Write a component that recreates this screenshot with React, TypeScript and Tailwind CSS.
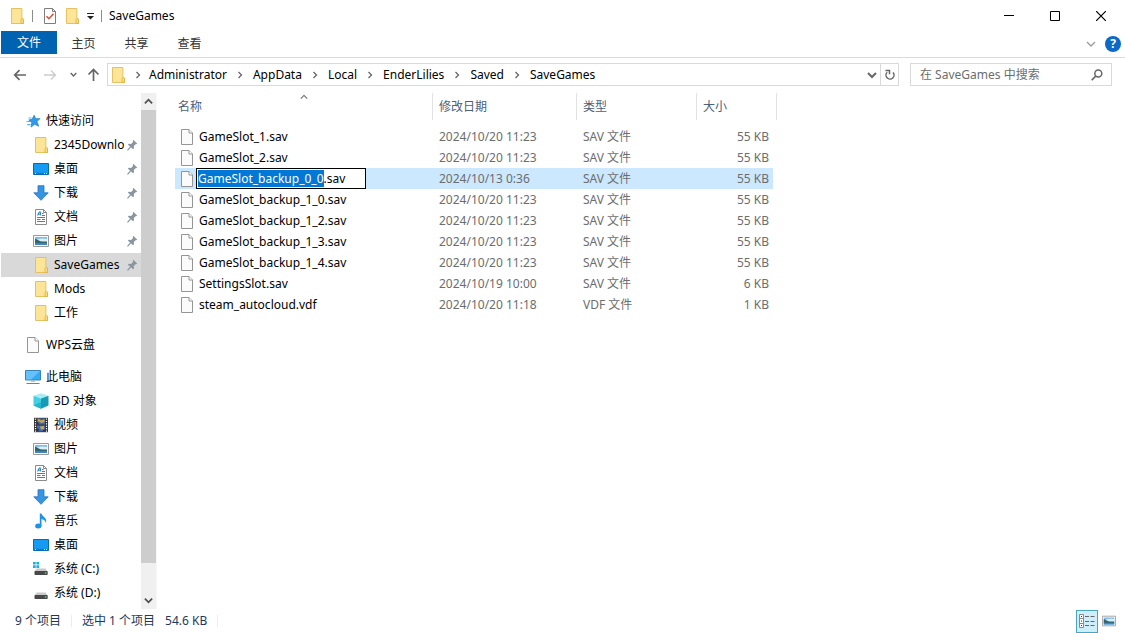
import { useEffect, useRef, type ReactNode } from 'react';

function FolderIcon() {
  return (
    <svg width="16" height="16" viewBox="0 0 16 16" className="shrink-0">
      <path d="M2.5.5h10.4v10l1.6 1v4h-12z" fill="#fde598" stroke="#e6c164" />
      <path d="M12 15.5v-3.8l1-1.4 1.5.8v4.4z" fill="#fbdc7c" stroke="#dcb040" strokeWidth="0.8" />
    </svg>
  );
}

function PageIcon() {
  return (
    <svg width="13" height="16" viewBox="0 0 13 16" className="shrink-0">
      <path d="M.5.5H8L11.5 4v11.5H.5z" fill="#fbfbfb" stroke="#959595" />
      <path d="M8 .5V4h3.5" fill="#fff" stroke="#959595" />
    </svg>
  );
}

function CheckPageIcon() {
  return (
    <svg width="13" height="16" viewBox="0 0 13 16">
      <path d="M.5.5h8l3 3v12H.5z" fill="#fff" stroke="#7d7d7d" />
      <path d="M8.5.5v3h3" fill="none" stroke="#7d7d7d" />
      <path d="M2.5 8.3l2.4 2.4 4.6-5" fill="none" stroke="#dd5333" strokeWidth="1.6" />
    </svg>
  );
}

function StarIcon() {
  return (
    <svg width="16" height="16" viewBox="0 0 16 16" className="shrink-0">
      <path d="M9.2 2.2l1.5 3.5 4.3-.1-3 3 1.7 4.7-4-2.1-3.6 2.9.7-4.6L3.8 7l3.2-.7z" fill="#2f9be8" stroke="#1c7cc6" strokeWidth="0.7" />
      <path d="M3.5 5h3M1.5 8.5h3.4M2.2 11.6h3.4" stroke="#5bb4f0" strokeWidth="1.1" />
    </svg>
  );
}

function DesktopIcon() {
  return (
    <svg width="16" height="16" viewBox="0 0 16 16" className="shrink-0">
      <path d="M.5 2.5h15v11H.5z" fill="#169bf5" stroke="#0b69ad" />
      <path d="M1 11.8h14v1.3H1z" fill="#0d7ccc" />
      <path d="M2 12.5h1M11 12.5h1M13 12.5h1" stroke="#fff" strokeWidth="0.8" />
    </svg>
  );
}

function DownloadIcon() {
  return (
    <svg width="16" height="16" viewBox="0 0 16 16" className="shrink-0">
      <path d="M5 .7h6v7.1h4.2L8 15.3.8 7.8H5z" fill="#3794e4" stroke="#2275bd" strokeWidth="0.8" />
    </svg>
  );
}

function DocumentIcon() {
  return (
    <svg width="16" height="16" viewBox="0 0 16 16" className="shrink-0">
      <path d="M2.5.5h8l3 3v12h-11z" fill="#fff" stroke="#8b8b8b" />
      <path d="M10.5.5v3h3" fill="none" stroke="#8b8b8b" />
      <path d="M4.5 6.500L6.300 3h1l.4 3.500M5 5.300h2.500M9 4.500h1.500M9 6.500h3M4 8.500h8M4 10.500h3.500M9 10.500h3M4 12.500h8" fill="none" stroke="#3285c8" strokeWidth="1.100" />
    </svg>
  );
}

function PictureIcon({ size = 16 }: { size?: number }) {
  return (
    <svg width={size} height={size} viewBox="0 0 16 16" className="shrink-0">
      <path d="M.5 2.5h15v11H.5z" fill="#fff" stroke="#9a9a9a" />
      <path d="M2 4h12v8H2z" fill="#7dbcf0" />
      <path d="M4 6.500c3-1.300 7-1.300 10-.5V9H4z" fill="#dceffa" />
      <path d="M2 6c2 0 3 1.600 5.500 2.200s4.500.3 6.500.3v1.700H2z" fill="#2f6470" />
      <path d="M2 10h12v2H2z" fill="#3f86bd" />
    </svg>
  );
}

function ComputerIcon() {
  return (
    <svg width="16" height="16" viewBox="0 0 16 16" className="shrink-0">
      <path d="M.5 1.5h15v9.5H.5z" fill="#36a9f4" stroke="#3a83b8" />
      <path d="M1 2h14L6 10.5H1z" fill="#66c1fa" />
      <path d="M6 11.5h4v1.3H6z" fill="#9dbdd3" />
      <path d="M1.5 14.5h13" stroke="#5a89aa" />
    </svg>
  );
}

function CubeIcon() {
  return (
    <svg width="16" height="16" viewBox="0 0 16 16" className="shrink-0">
      <path d="M8 .3l7.5 2.5L8 5.5.5 2.8z" fill="#a8ecf4" />
      <path d="M.5 2.8L8 5.5v10.2L.5 12.5z" fill="#45cfe2" />
      <path d="M15.5 2.8L8 5.5v10.2l7.5-3.2z" fill="#159bb5" />
      <path d="M.5 12.5L8 9v6.7z" fill="#26b4cf" />
    </svg>
  );
}

function VideoIcon() {
  return (
    <svg width="16" height="16" viewBox="0 0 16 16" className="shrink-0">
      <path d="M1 .8h14v14.4H1z" fill="#333" />
      <path d="M2.5 1.5v14M13.5 1.5v14" stroke="#fff" strokeWidth="1.2" strokeDasharray="1.2 1.2" />
      <path d="M4 1.5h8v6H4zM4 8.5h8v6H4z" fill="#4668b4" />
      <path d="M5 1.500l3 2 3.500-1v2.500L8.500 6 5 4zM7 9.500l4-.5v3l-3 .5z" fill="#caa842" />
      <path d="M4 5l3 2.500H4zM9 14.500l3-2.500v2.500zM4 11l2.500 2L4 14.500z" fill="#26304a" />
    </svg>
  );
}

function MusicIcon() {
  return (
    <svg width="16" height="16" viewBox="0 0 16 16" className="shrink-0">
      <ellipse cx="5.3" cy="13" rx="3.2" ry="2.5" fill="#1e94e6" />
      <path d="M6.8.5h1.7c.3 3 6.500 4.300 4.300 9.500-.4-2.400-2.200-3.500-4.300-3.900V13H6.800z" fill="#1e94e6" />
    </svg>
  );
}

function DriveIcon({ system = false }: { system?: boolean }) {
  return (
    <svg width="16" height="16" viewBox="0 0 16 16" className="shrink-0">
      <path d="M3.5 7.5h9l2.2 3H1.5z" fill="#c9c9c9" />
      <rect x="1.5" y="10" width="13.2" height="4" rx="0.8" fill="#484848" />
      <path d="M11.8 12h1.6" stroke="#57e08a" strokeWidth="1.2" />
      {system && <path d="M0 1h2.7v2.6H0zM3.4 1h2.8v2.6H3.4zM0 4.3h2.7v2.6H0zM3.4 4.3h2.8v2.6H3.4z" fill="#1cb0dc" />}
    </svg>
  );
}

function PinIcon() {
  return (
    <svg width="11" height="12" viewBox="0 0 11 12" className="shrink-0">
      <path d="M6.3.8l4 4-1.2.5-.5-.1-1.8 1.9.2 2.2-.9.9L.9 5.7l.9-.9 2.3.1L6 3.1l-.2-1z" fill="#8996a0" />
      <path d="M3.6 7.8L.5 11.3" stroke="#8996a0" strokeWidth="1.2" />
    </svg>
  );
}

function Chevron({ d, size = 10, color = '#666', width = 1.3 }: { d: string; size?: number; color?: string; width?: number }) {
  return (
    <svg width={size} height={size} viewBox="0 0 10 10" fill="none" stroke={color} strokeWidth={width} className="shrink-0">
      <path d={d} />
    </svg>
  );
}

const DOWN = 'M1 3l4 4 4-4';
const UP = 'M1 7l4-4 4 4';
const RIGHT = 'M3.5 2l3 3-3 3';

type Place = { label: string; icon: ReactNode; pinned?: boolean; selected?: boolean };
type Group = { label: string; icon: ReactNode; items: Place[] };

const groups: Group[] = [
  {
    label: '快速访问',
    icon: <StarIcon />,
    items: [
      { label: '2345Downloads', icon: <FolderIcon />, pinned: true },
      { label: '桌面', icon: <DesktopIcon />, pinned: true },
      { label: '下载', icon: <DownloadIcon />, pinned: true },
      { label: '文档', icon: <DocumentIcon />, pinned: true },
      { label: '图片', icon: <PictureIcon />, pinned: true },
      { label: 'SaveGames', icon: <FolderIcon />, pinned: true, selected: true },
      { label: 'Mods', icon: <FolderIcon /> },
      { label: '工作', icon: <FolderIcon /> },
    ],
  },
  { label: 'WPS云盘', icon: <PageIcon />, items: [] },
  {
    label: '此电脑',
    icon: <ComputerIcon />,
    items: [
      { label: '3D 对象', icon: <CubeIcon /> },
      { label: '视频', icon: <VideoIcon /> },
      { label: '图片', icon: <PictureIcon /> },
      { label: '文档', icon: <DocumentIcon /> },
      { label: '下载', icon: <DownloadIcon /> },
      { label: '音乐', icon: <MusicIcon /> },
      { label: '桌面', icon: <DesktopIcon /> },
      { label: '系统 (C:)', icon: <DriveIcon system /> },
      { label: '系统 (D:)', icon: <DriveIcon /> },
    ],
  },
];

const files = [
  { name: 'GameSlot_1.sav', date: '2024/10/20 11:23', type: 'SAV 文件', size: '55 KB' },
  { name: 'GameSlot_2.sav', date: '2024/10/20 11:23', type: 'SAV 文件', size: '55 KB' },
  { name: 'GameSlot_backup_0_0.sav', date: '2024/10/13 0:36', type: 'SAV 文件', size: '55 KB', renaming: true },
  { name: 'GameSlot_backup_1_0.sav', date: '2024/10/20 11:23', type: 'SAV 文件', size: '55 KB' },
  { name: 'GameSlot_backup_1_2.sav', date: '2024/10/20 11:23', type: 'SAV 文件', size: '55 KB' },
  { name: 'GameSlot_backup_1_3.sav', date: '2024/10/20 11:23', type: 'SAV 文件', size: '55 KB' },
  { name: 'GameSlot_backup_1_4.sav', date: '2024/10/20 11:23', type: 'SAV 文件', size: '55 KB' },
  { name: 'SettingsSlot.sav', date: '2024/10/19 10:00', type: 'SAV 文件', size: '6 KB' },
  { name: 'steam_autocloud.vdf', date: '2024/10/20 11:18', type: 'VDF 文件', size: '1 KB' },
];

const crumbs = ['Administrator', 'AppData', 'Local', 'EnderLilies', 'Saved', 'SaveGames'];

function TitleBar() {
  return (
    <header className="flex h-[31px] items-center pl-[9px] pr-px">
      <FolderIcon />
      <span className="mx-[7px] h-3 w-px bg-[#8c8c8c]" />
      <div className="flex items-center gap-[7px] pl-1">
        <button aria-label="属性"><CheckPageIcon /></button>
        <button aria-label="新建文件夹"><FolderIcon /></button>
        <button aria-label="自定义快速访问工具栏">
          <svg width="7" height="8" viewBox="0 0 7 8">
            <path d="M0 4h7L3.5 7.5z" fill="#222" />
            <path d="M0 1.5h7" stroke="#222" />
          </svg>
        </button>
      </div>
      <span className="mx-[7px] h-3 w-px bg-[#8c8c8c]" />
      <h1 className="flex-1">SaveGames</h1>
      <button aria-label="最小化" className="flex h-full w-[46px] items-center justify-center">
        <svg width="10" height="10" viewBox="0 0 10 10"><path d="M0 4.5h10" stroke="#000" /></svg>
      </button>
      <button aria-label="最大化" className="flex h-full w-[46px] items-center justify-center">
        <svg width="10" height="10" viewBox="0 0 10 10"><path d="M.5.5h9v9h-9z" fill="none" stroke="#000" /></svg>
      </button>
      <button aria-label="关闭" className="flex h-full w-[46px] items-center justify-center">
        <svg width="10" height="10" viewBox="0 0 10 10"><path d="M0 0l10 10M10 0L0 10" stroke="#000" strokeWidth="1.2" /></svg>
      </button>
    </header>
  );
}

function Ribbon() {
  return (
    <nav className="flex h-[27px] border-b border-[#dadbdc] pl-px pr-1">
      <button className="h-[23px] w-14 bg-[#0063b1] text-white">文件</button>
      <div className="flex flex-1 items-center">
        {['主页', '共享', '查看'].map((tab) => (
          <button key={tab} className="w-[53px] text-[#333]">{tab}</button>
        ))}
      </div>
      <div className="flex items-center gap-[9px]">
        <button aria-label="展开功能区"><Chevron d={DOWN} color="#9a9a9a" /></button>
        <button aria-label="帮助" className="size-4 rounded-full bg-[#0c69c7] text-center text-xs leading-4 font-bold text-white">?</button>
      </div>
    </nav>
  );
}

function AddressBar() {
  return (
    <div className="flex h-[33px] items-center pl-3 pr-[13px]">
      <button aria-label="后退" className="flex w-4 justify-center">
        <svg width="14" height="12" viewBox="0 0 14 12" fill="none" stroke="#666" strokeWidth="1.7"><path d="M13 6H2M6.5 1.2L1.7 6l4.8 4.8" /></svg>
      </button>
      <button aria-label="前进" className="ml-[14px] flex w-4 justify-center">
        <svg width="14" height="12" viewBox="0 0 14 12" fill="none" stroke="#ccc" strokeWidth="1.3"><path d="M1 6h11M8 1.5L12.5 6 8 10.5" /></svg>
      </button>
      <button aria-label="最近浏览的位置" className="ml-[11px] flex w-2 justify-center"><Chevron d={DOWN} size={7} width={2} /></button>
      <button aria-label="上移" className="ml-2 flex w-4 justify-center">
        <svg width="13" height="13" viewBox="0 0 13 13" fill="none" stroke="#666" strokeWidth="1.7"><path d="M6.5 13V2M1.5 6.5l5-5 5 5" /></svg>
      </button>
      <div className="ml-[6px] flex h-[23px] min-w-0 flex-1 items-center border border-[#d9d9d9] pl-[2px]">
        <FolderIcon />
        <ol className="flex min-w-0 flex-1 items-center">
          {crumbs.map((crumb) => (
            <li key={crumb} className="group flex items-center">
              <span className="flex w-[26px] justify-center group-first:w-[23px]"><Chevron d={RIGHT} /></span>
              <a href="#" className="text-black">{crumb}</a>
            </li>
          ))}
        </ol>
        <button aria-label="以前的位置" className="flex w-4 justify-center"><Chevron d={DOWN} width={2} /></button>
        <button aria-label="刷新" className="flex h-full w-[18px] items-center justify-center border-l border-[#d9d9d9]">
          <svg width="12" height="12" viewBox="0 0 12 12" fill="none" stroke="#666" strokeWidth="1.5">
            <path d="M3.2 3.2a4 4 0 1 0 5.8.2" />
            <path d="M1.5 1.5h4v3.7" />
          </svg>
        </button>
      </div>
      <label className="ml-[11px] flex h-[23px] w-[202px] items-center border border-[#d9d9d9] pl-[9px] pr-2">
        <input type="search" aria-label="搜索" placeholder="在 SaveGames 中搜索" className="min-w-0 flex-1 outline-none placeholder:text-[#6d6d6d]" />
        <svg width="12" height="12" viewBox="0 0 12 12" fill="none" stroke="#666" strokeWidth="1.5"><circle cx="7.3" cy="4.5" r="3.5" /><path d="M4.7 7.1l-4 4" /></svg>
      </label>
    </div>
  );
}

function Sidebar() {
  return (
    <aside className="flex w-[157px] shrink-0 border-r border-[#f7f7f7]">
      <nav className="flex min-w-0 flex-1 flex-col gap-2 overflow-hidden pl-px pt-4">
        {groups.map((group) => (
          <section key={group.label}>
            <a href="#" className="flex h-6 items-center gap-[5px] pl-6">
              <span className="flex w-4 justify-center">{group.icon}</span>
              {group.label}
            </a>
            {group.items.map((item) => (
              <a
                key={item.label}
                href="#"
                className={`flex h-6 items-center pl-8 pr-[3px] ${item.selected ? 'bg-[#d9d9d9]' : ''}`}
              >
                {item.icon}
                <span className="ml-[5px] mr-[3px] min-w-0 flex-1 overflow-hidden whitespace-nowrap">{item.label}</span>
                {item.pinned && <PinIcon />}
              </a>
            ))}
          </section>
        ))}
      </nav>
      <div className="flex w-[15px] flex-col bg-[#f0f0f0]">
        <button aria-label="向上滚动" className="flex h-[17px] items-center justify-center"><Chevron d={UP} size={9} color="#505050" width={2} /></button>
        <div className="flex-[453] bg-[#cdcdcd]" />
        <div className="flex-[29]" />
        <button aria-label="向下滚动" className="flex h-[17px] items-center justify-center"><Chevron d={DOWN} size={9} color="#505050" width={2} /></button>
      </div>
    </aside>
  );
}

function RenameBox({ name }: { name: string }) {
  const ref = useRef<HTMLInputElement>(null);
  useEffect(() => {
    ref.current?.focus();
    ref.current?.setSelectionRange(0, name.lastIndexOf('.'));
  }, [name]);
  return (
    <input
      ref={ref}
      aria-label="重命名"
      defaultValue={name}
      className="h-[21px] w-[170px] border border-black bg-white px-px text-black outline-none selection:bg-[#0078d7] selection:text-white"
    />
  );
}

function FileTable() {
  const divider = 'flex h-[27px] items-center border-r border-[#e2e2e2]';
  return (
    <table className="w-[602px] table-fixed border-collapse self-start text-left whitespace-nowrap">
      <colgroup>
        <col className="w-[258px]" />
        <col className="w-[144px]" />
        <col className="w-[120px]" />
        <col className="w-[76px]" />
        <col className="w-1" />
      </colgroup>
      <thead className="text-[#4c607a]">
        <tr>
          <th className="p-0 pb-[6px] font-normal">
            <div className={`relative ${divider} pl-[3px]`}>
              名称
              <span className="absolute left-1/2 top-0 -translate-x-1/2"><Chevron d={UP} size={8} /></span>
            </div>
          </th>
          <th className="p-0 pb-[6px] font-normal"><div className={`${divider} pl-[6px]`}>修改日期</div></th>
          <th className="p-0 pb-[6px] font-normal"><div className={`${divider} pl-[6px]`}>类型</div></th>
          <th colSpan={2} className="p-0 pb-[6px] font-normal"><div className={`${divider} pl-[6px]`}>大小</div></th>
        </tr>
      </thead>
      <tbody className="text-[#6d6d6d]">
        {files.map((file) => {
          const bg = file.renaming ? 'bg-[#cce8ff]' : '';
          return (
            <tr key={file.name} className="h-[21px]">
              <td className={`p-0 ${bg}`}>
                <div className="flex h-[21px] items-center gap-[2px] pl-[6px] text-black">
                  <PageIcon />
                  {file.renaming ? <RenameBox name={file.name} /> : <span className="px-[3px]">{file.name}</span>}
                </div>
              </td>
              <td className={`p-0 pl-[6px] ${bg}`}>{file.date}</td>
              <td className={`p-0 pl-[6px] ${bg}`}>{file.type}</td>
              <td className={`p-0 pr-1 text-right ${bg}`}>{file.size}</td>
              <td className="p-0" />
            </tr>
          );
        })}
      </tbody>
    </table>
  );
}

function StatusBar() {
  return (
    <footer className="flex h-6 items-center pl-[15px] pr-[5px] text-[#1e395b]">
      <span>9 个项目</span>
      <span className="mx-[10px] h-3 w-px bg-[#ececec]" />
      <span>选中 1 个项目</span>
      <span className="mx-[10px]">54.6 KB</span>
      <span className="h-3 w-px bg-[#ececec]" />
      <div className="ml-auto flex h-full items-center">
        <button aria-label="详细信息" className="flex h-[23px] w-[22px] items-center justify-center border border-[#4aa5c5] bg-[#cdeefa]">
          <svg width="16" height="14" viewBox="0 0 16 14" fill="none">
            <path d="M.5.5h4v13h-4zM.5 4.5h4M.5 9.5h4" stroke="#8a8a8a" fill="#fff" />
            <path d="M2 2.5h1M2 7h1M2 11.5h1" stroke="#333" />
            <path d="M6 2.5h4M11.5 2.5h4M6 7.5h4M11.5 7.5h4M6 11.5h4M11.5 11.5h4" stroke="#666" />
          </svg>
        </button>
        <button aria-label="大缩略图" className="flex h-[23px] w-[22px] items-center justify-center">
          <PictureIcon size={14} />
        </button>
      </div>
    </footer>
  );
}

export default function App() {
  return (
    <div className="flex min-h-screen flex-col bg-white font-['Noto_Sans','Noto_Sans_CJK_SC',sans-serif] text-xs text-black">
      <TitleBar />
      <Ribbon />
      <AddressBar />
      <main className="flex flex-1 gap-[18px] pt-[2px]">
        <Sidebar />
        <FileTable />
      </main>
      <StatusBar />
    </div>
  );
}
